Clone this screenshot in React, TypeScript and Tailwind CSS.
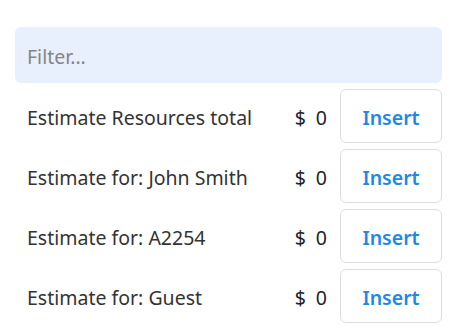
import React from "react";

const rows = [
  "Estimate Resources total",
  "Estimate for: John Smith",
  "Estimate for: A2254",
  "Estimate for: Guest",
];

export default function App() {
  return (
    <div
      className="w-[456px] h-[336px] bg-white pl-[15px] pr-[14px] pt-[27px] flex flex-col gap-[6px]"
      style={{ fontFamily: '"Noto Sans", "Open Sans", sans-serif' }}
    >
      <div className="h-[56px] rounded-[6px] bg-[#e8f0fe] flex items-center px-[12px] pt-[3px]">
        <input
          className="w-full bg-transparent outline-none text-[19.5px] text-[#333] placeholder:text-[#858585]"
          placeholder="Filter..."
        />
      </div>
      {rows.map((r) => (
        <div key={r} className="flex items-center h-[54px]">
          <div className="flex-1 pl-[12px] pt-[3px] text-[19.5px] text-[#333]">{r}</div>
          <div className="flex items-center gap-[10px] pt-[3px] text-[19.5px] text-[#222] mr-[13px]">
            <span>$</span>
            <span>0</span>
          </div>
          <button className="w-[102px] h-[54px] pt-[3px] border border-[#ddd] rounded-[6px] bg-white text-[#1e88e5] text-[19.5px] font-semibold">
            Insert
          </button>
        </div>
      ))}
    </div>
  );
}
